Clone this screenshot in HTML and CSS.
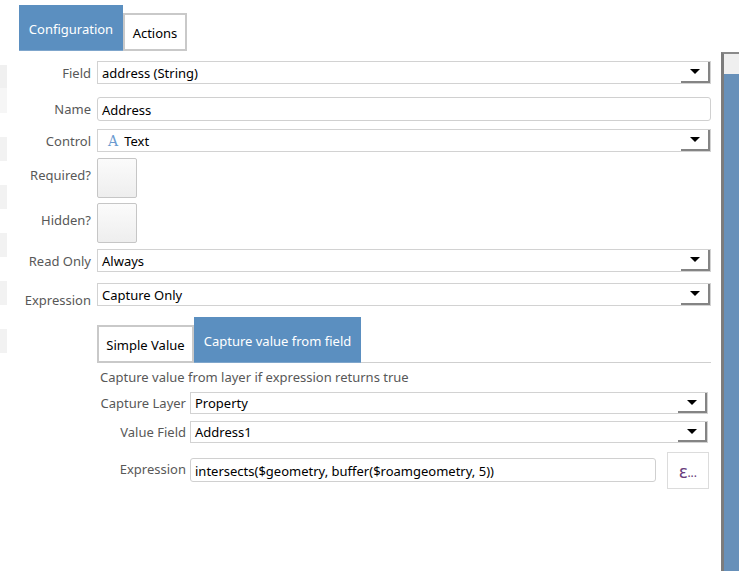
FILE: index.html
```html
<!DOCTYPE html>
<html>
<head>
<meta charset="utf-8">
<link rel="stylesheet" href="styles.css">
</head>
<body>
<div class="page">
  <div class="strip">
    <div class="blk blk-a"></div>
    <div class="blk blk-b"></div>
    <div class="blk blk-c"></div>
    <div class="blk blk-c"></div>
    <div class="blk blk-c"></div>
    <div class="blk blk-c"></div>
    <div class="blk blk-c"></div>
  </div>
  <div class="main">
    <div class="tabs">
      <div class="tab tab-active">Configuration</div>
      <div class="tab tab-plain">Actions</div>
    </div>

    <div class="row row-field">
      <div class="lbl">Field</div>
      <div class="combo"><span class="val">address (String)</span><span class="btn"><i class="tri"></i></span></div>
    </div>
    <div class="row row-name">
      <div class="lbl">Name</div>
      <div class="textbox"><span class="val">Address</span></div>
    </div>
    <div class="row row-control">
      <div class="lbl">Control</div>
      <div class="combo"><span class="val"><span class="aicon">A</span>Text</span><span class="btn"><i class="tri"></i></span></div>
    </div>
    <div class="row row-req">
      <div class="lbl lbl-top">Required?</div>
      <div class="check"></div>
    </div>
    <div class="row row-hid">
      <div class="lbl lbl-top">Hidden?</div>
      <div class="check"></div>
    </div>
    <div class="row row-ro">
      <div class="lbl">Read Only</div>
      <div class="combo"><span class="val">Always</span><span class="btn"><i class="tri"></i></span></div>
    </div>
    <div class="row row-expr">
      <div class="lbl lbl-low">Expression</div>
      <div class="combo"><span class="val">Capture Only</span><span class="btn"><i class="tri"></i></span></div>
    </div>

    <div class="sub">
      <div class="subtabs">
        <div class="tab sub-plain">Simple Value</div>
        <div class="tab sub-active">Capture value from field</div>
        <div class="tabline"></div>
      </div>
      <div class="desc">Capture value from layer if expression returns true</div>
      <div class="srow srow-layer">
        <div class="slbl">Capture Layer</div>
        <div class="combo"><span class="val">Property</span><span class="btn"><i class="tri"></i></span></div>
      </div>
      <div class="srow srow-field">
        <div class="slbl">Value Field</div>
        <div class="combo"><span class="val">Address1</span><span class="btn"><i class="tri"></i></span></div>
      </div>
      <div class="srow srow-expr">
        <div class="slbl slbl-expr">Expression</div>
        <div class="textbox exprbox"><span class="val">intersects($geometry, buffer($roamgeometry, 5))</span></div>
        <div class="epsbtn"><span class="eps">ε</span><span class="dots">...</span></div>
      </div>
    </div>
  </div>
  <div class="scroll">
    <div class="track"></div>
    <div class="thumb"></div>
  </div>
</div>
</body>
</html>
```

FILE: styles.css
```css
* { box-sizing: border-box; }
html, body {
  margin: 0;
  padding: 0;
  background: #ffffff;
}
body {
  font-family: "Noto Sans", "Open Sans", sans-serif;
  font-size: 12px;
  color: #000;
  width: 739px;
  height: 571px;
  overflow: hidden;
}
.page {
  display: flex;
  height: 571px;
}
.strip {
  width: 7px;
  flex: none;
  display: flex;
  flex-direction: column;
  padding-top: 65px;
}
.blk { background: #f2f2f2; }
.blk-a { height: 23px; background: #f0f0f0; }
.blk-b { height: 25px; background: #f6f6f6; }
.blk-c { height: 24px; margin-top: 24px; }

.main {
  width: 692px;
  margin-left: 12px;
  flex: none;
  display: flex;
  flex-direction: column;
}

.tabs {
  display: flex;
  align-items: flex-end;
  height: 51px;
}
.tab {
  display: flex;
  align-items: center;
  justify-content: center;
  font-size: 13px;
}
.tab-active {
  width: 104px;
  height: 46px;
  background: #5b8fc0;
  color: #ffffff;
  padding-top: 2px;
  border-bottom: 1px solid #7fa6cc;
}
.tab-plain {
  width: 64px;
  height: 38px;
  border: 2px solid #c9c9c9;
  background: #fff;
  padding-top: 2px;
}

.row {
  display: flex;
  align-items: center;
}
.lbl {
  width: 72px;
  margin-right: 6px;
  text-align: right;
  color: #585858;
  font-size: 13px;
  flex: none;
}
.row-field { margin-top: 10px; height: 23px; }
.row-name { margin-top: 13px; height: 24px; }
.row-control { margin-top: 8px; height: 23px; }
.row-req { margin-top: 6px; height: 40px; align-items: flex-start; }
.row-hid { margin-top: 5px; height: 40px; align-items: flex-start; }
.row-ro { margin-top: 6px; height: 23px; }
.row-expr { margin-top: 11px; height: 23px; align-items: flex-start; }
.lbl-top { padding-top: 8px; }
.lbl-low { padding-top: 8px; }

.combo {
  flex: 1;
  height: 100%;
  border: 1px solid #d2d2d2;
  display: flex;
  align-items: center;
  background: #fff;
}
.val {
  flex: 1;
  padding-left: 4px;
  white-space: nowrap;
  display: flex;
  align-items: center;
  font-size: 13px;
}
.textbox .val { padding-top: 1px; }
.btn {
  width: 29px;
  height: 100%;
  border-right: 2px solid #848484;
  border-bottom: 2px solid #848484;
  display: flex;
  align-items: center;
  justify-content: center;
  flex: none;
  padding-left: 1px;
}
.tri {
  width: 0;
  height: 0;
  border-left: 5px solid transparent;
  border-right: 5px solid transparent;
  border-top: 5px solid #000;
}
.textbox {
  flex: 1;
  height: 100%;
  border: 1px solid #d0d0d0;
  border-radius: 3px;
  display: flex;
  align-items: center;
  background: #fff;
}
.aicon {
  font-family: "DejaVu Serif", "Liberation Serif", serif;
  color: #6b9bd0;
  font-size: 14px;
  margin-left: 6px;
  margin-right: 6px;
}
.check {
  width: 40px;
  height: 40px;
  border: 1px solid #c6c6c6;
  border-radius: 2px;
  background: linear-gradient(#fbfbfb, #eeeeee);
}

.sub {
  margin-left: 78px;
  margin-top: 11px;
  display: flex;
  flex-direction: column;
  padding-right: 3px;
}
.subtabs {
  display: flex;
  align-items: flex-end;
  height: 46px;
  margin-right: -3px;
}
.sub-plain {
  width: 97px;
  height: 38px;
  border: 2px solid #c9c9c9;
  padding-top: 1px;
}
.sub-active {
  width: 167px;
  height: 46px;
  background: #5b8fc0;
  color: #fff;
  padding-top: 3px;
  border-bottom: 1px solid #7fa6cc;
}
.tabline {
  flex: 1;
  height: 1px;
  background: #cfcfcf;
  margin-bottom: 0;
}
.desc {
  margin-top: 6px;
  padding-left: 3px;
  height: 16px;
  line-height: 16px;
  color: #585858;
  font-size: 13px;
}
.srow {
  display: flex;
  align-items: center;
  padding-left: 3px;
}
.slbl {
  width: 86px;
  margin-right: 4px;
  text-align: right;
  color: #585858;
  font-size: 13px;
  flex: none;
  white-space: nowrap;
}
.slbl-expr { padding-bottom: 3px; }
.srow-layer { margin-top: 7px; height: 22px; }
.srow-field { margin-top: 7px; height: 22px; }
.srow-expr { margin-top: 9px; height: 37px; }
.exprbox {
  height: 24px;
  flex: 1;
  margin-bottom: 1px;
}
.epsbtn {
  width: 42px;
  height: 37px;
  margin-left: 11px;
  margin-right: -1px;
  border: 1px solid #dcdcdc;
  display: flex;
  align-items: center;
  justify-content: center;
  color: #6a3d7c;
  flex: none;
}
.eps {
  font-size: 18px;
  line-height: 1;
}
.dots {
  font-size: 12px;
  padding-top: 4px;
}

.scroll {
  width: 18px;
  margin-left: 10px;
  margin-top: 52px;
  flex: none;
  display: flex;
  flex-direction: column;
  border-left: 3px solid #7c7c7c;
  border-top: 2px solid #8a8a8a;
}
.track {
  height: 20px;
  background: #efefef;
}
.thumb {
  flex: 1;
  background: #6790b9;
}
```
